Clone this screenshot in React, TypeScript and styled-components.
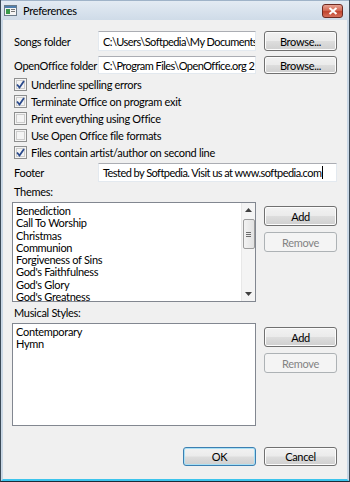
import React from "react";
import styled, { createGlobalStyle, css } from "styled-components";

const Global = createGlobalStyle`
  html, body { margin: 0; padding: 0; background: #ffffff; }
  body { font-family: Lato, "Noto Sans", sans-serif; font-size: 11px; letter-spacing: -0.3px; color: #000; }
  * { box-sizing: border-box; }
`;

const Window = styled.div`
  width: 350px;
  height: 482px;
  display: flex;
  flex-direction: column;
  background: #f0f0f0;
  border-left: 1px solid #3b4a57;
  border-right: 1px solid #3b4a57;
  border-bottom: 1px solid #1c2a36;
  overflow: hidden;
`;

const TitleBar = styled.div`
  height: 20px;
  flex: 0 0 20px;
  display: flex;
  align-items: center;
  padding: 0 6px 0 3px;
  gap: 6px;
  background: linear-gradient(#e3ebf3, #cfdbe8);
  border-top: 1px solid #9fb3c8;
`;

const TitleText = styled.span`
  flex: 1;
  font-size: 11px;
  color: #000;
`;

const CloseBtn = styled.div`
  width: 21px;
  height: 14px;
  border-radius: 3px;
  border: 1px solid #6d2a22;
  background: linear-gradient(#e7a292 0%, #d36b57 45%, #c0442e 55%, #d7705c 100%);
  display: flex;
  align-items: center;
  justify-content: center;
`;

const Frame = styled.div`
  flex: 1;
  display: flex;
  flex-direction: column;
  border-left: 2px solid #c9d7e5;
  border-right: 2px solid #c9d7e5;
  border-bottom: 2px solid #3cc4ec;
`;

const Body = styled.div`
  flex: 1;
  display: flex;
  flex-direction: column;
  padding: 11px 10px 0 9px;
`;

const FieldRow = styled.div<{ $mt?: number }>`
  display: grid;
  grid-template-columns: 78px minmax(0, 1fr) 73px;
  column-gap: 8px;
  align-items: center;
  height: 20px;
  margin-top: ${(p) => p.$mt ?? 0}px;
`;

const FooterRow = styled.div`
  display: grid;
  grid-template-columns: 78px minmax(0, 1fr);
  column-gap: 8px;
  align-items: center;
  height: 19px;
  margin-top: 2px;
`;

const Label = styled.span`
  padding-left: 2px;
  white-space: nowrap;
`;

const TextBox = styled.div<{ $h?: number }>`
  height: ${(p) => p.$h ?? 20}px;
  background: #fff;
  border: 1px solid #e3e9ef;
  border-top-color: #abadb3;
  padding: 0 1px 0 4px;
  display: flex;
  align-items: center;
  white-space: nowrap;
  overflow: hidden;
  letter-spacing: -0.55px;
`;

const Caret = styled.span`
  display: inline-block;
  width: 1px;
  height: 13px;
  background: #000;
  margin-left: 1px;
`;

const Button = styled.div<{ $disabled?: boolean; $default?: boolean; $h?: number }>`
  height: ${(p) => p.$h ?? 20}px;
  border: 1px solid #707070;
  border-radius: 3px;
  background: linear-gradient(#f2f2f2 0%, #ebebeb 48%, #dddddd 52%, #cfcfcf 100%);
  box-shadow: inset 0 0 0 1px #fcfcfc;
  display: flex;
  align-items: center;
  justify-content: center;
  color: #000;
  white-space: nowrap;
  ${(p) =>
    p.$disabled &&
    css`
      border-color: #adb2b5;
      background: #f4f4f4;
      color: #838383;
      box-shadow: none;
    `}
  ${(p) =>
    p.$default &&
    css`
      border-color: #3c7fb1;
      box-shadow: inset 0 0 0 1px #a9e0f5;
    `}
`;

const Checks = styled.div`
  display: flex;
  flex-direction: column;
  margin-top: 1px;
`;

const CheckRow = styled.div`
  height: 17px;
  display: flex;
  align-items: center;
  gap: 4px;
  padding-left: 2px;
`;

const Box = styled.div`
  width: 13px;
  height: 13px;
  border: 1px solid #8e8f8f;
  background: #f4f4f4;
  display: flex;
  align-items: center;
  justify-content: center;
  box-shadow: inset 0 0 0 1px #f4f4f4, inset 0 0 0 2px #cdcdcd;
`;

const SectionLabel = styled.div<{ $mt: number }>`
  margin-top: ${(p) => p.$mt}px;
  padding-left: 2px;
  height: 14px;
  line-height: 14px;
`;

const ListRow = styled.div<{ $h: number; $mt: number }>`
  display: grid;
  grid-template-columns: minmax(0, 1fr) 73px;
  column-gap: 8px;
  height: ${(p) => p.$h}px;
  margin-top: ${(p) => p.$mt}px;
`;

const ListBox = styled.div`
  background: #fff;
  border: 1px solid #828790;
  display: flex;
  overflow: hidden;
`;

const Items = styled.div`
  flex: 1;
  padding: 2px 3px;
  line-height: 12.3px;
`;

const ListButtons = styled.div`
  display: flex;
  flex-direction: column;
  gap: 6px;
  padding-top: 4px;
`;

const ScrollBar = styled.div`
  width: 14px;
  background: #f4f4f4;
  border-left: 1px solid #e8e8e8;
  display: flex;
  flex-direction: column;
  align-items: center;
`;

const Arrow = styled.div`
  height: 14px;
  display: flex;
  align-items: center;
  justify-content: center;
`;

const Thumb = styled.div`
  width: 12px;
  height: 30px;
  border: 1px solid #9c9c9c;
  border-radius: 2px;
  background: linear-gradient(90deg, #f2f2f2, #e2e2e2);
  margin-top: 2px;
  display: flex;
  flex-direction: column;
  align-items: center;
  justify-content: center;
  gap: 1px;
`;

const Grip = styled.div`
  width: 5px;
  height: 1px;
  background: #6d6d6d;
`;

const Track = styled.div`
  flex: 1;
`;

const Bottom = styled.div`
  display: flex;
  justify-content: flex-end;
  gap: 8px;
  margin-top: 21px;
`;

const BottomButton = styled(Button)`
  width: 73px;
`;

const Check = () => (
  <svg width="9" height="9" viewBox="0 0 9 9">
    <path d="M1 4.5 L3.5 7.5 L8 1" fill="none" stroke="#2a4a8c" strokeWidth="1.8" />
  </svg>
);

const CheckItem = ({ checked, label }: { checked: boolean; label: string }) => (
  <CheckRow>
    <Box>{checked && <Check />}</Box>
    <span>{label}</span>
  </CheckRow>
);

const themes = [
  "Benediction",
  "Call To Worship",
  "Christmas",
  "Communion",
  "Forgiveness of Sins",
  "God's Faithfulness",
  "God's Glory",
  "God's Greatness",
];

export default function App() {
  return (
    <>
      <Global />
      <Window>
        <TitleBar>
          <svg width="13" height="11" viewBox="0 0 13 11">
            <rect x="0.5" y="0.5" width="12" height="10" fill="#f4f4f4" stroke="#6a7a88" />
            <rect x="1" y="1" width="11" height="2" fill="#4f7fae" />
            <rect x="2" y="4" width="4" height="5" fill="#3a9a4a" />
            <rect x="7" y="4" width="4" height="1" fill="#777" />
            <rect x="7" y="6" width="4" height="1" fill="#777" />
          </svg>
          <TitleText>Preferences</TitleText>
          <CloseBtn>
            <svg width="10" height="8" viewBox="0 0 10 8">
              <path d="M1.5 1 L8.5 7 M8.5 1 L1.5 7" stroke="#fff" strokeWidth="2" />
            </svg>
          </CloseBtn>
        </TitleBar>
        <Frame>
          <Body>
            <FieldRow>
              <Label>Songs folder</Label>
              <TextBox>C:\Users\Softpedia\My Documents</TextBox>
              <Button>Browse...</Button>
            </FieldRow>
            <FieldRow $mt={4}>
              <Label>OpenOffice folder</Label>
              <TextBox $h={18}>C:\Program Files\OpenOffice.org 2</TextBox>
              <Button $h={18}>Browse...</Button>
            </FieldRow>
            <Checks>
              <CheckItem checked label="Underline spelling errors" />
              <CheckItem checked label="Terminate Office on program exit" />
              <CheckItem checked={false} label="Print everything using Office" />
              <CheckItem checked={false} label="Use Open Office file formats" />
              <CheckItem checked label="Files contain artist/author on second line" />
            </Checks>
            <FooterRow>
              <Label>Footer</Label>
              <TextBox $h={19}>
                Tested by Softpedia. Visit us at www.softpedia.com<Caret />
              </TextBox>
            </FooterRow>
            <SectionLabel $mt={3}>Themes:</SectionLabel>
            <ListRow $h={100} $mt={3}>
              <ListBox>
                <Items>
                  {themes.map((t) => (
                    <div key={t}>{t}</div>
                  ))}
                </Items>
                <ScrollBar>
                  <Arrow>
                    <svg width="7" height="4" viewBox="0 0 7 4">
                      <path d="M0 4 L3.5 0 L7 4 Z" fill="#404040" />
                    </svg>
                  </Arrow>
                  <Thumb>
                    <Grip />
                    <Grip />
                    <Grip />
                  </Thumb>
                  <Track />
                  <Arrow>
                    <svg width="7" height="4" viewBox="0 0 7 4">
                      <path d="M0 0 L3.5 4 L7 0 Z" fill="#404040" />
                    </svg>
                  </Arrow>
                </ScrollBar>
              </ListBox>
              <ListButtons>
                <Button>Add</Button>
                <Button $disabled>Remove</Button>
              </ListButtons>
            </ListRow>
            <SectionLabel $mt={4}>Musical Styles:</SectionLabel>
            <ListRow $h={103} $mt={3}>
              <ListBox>
                <Items>
                  <div>Contemporary</div>
                  <div>Hymn</div>
                </Items>
              </ListBox>
              <ListButtons>
                <Button>Add</Button>
                <Button $disabled>Remove</Button>
              </ListButtons>
            </ListRow>
            <Bottom>
              <BottomButton $default $h={19}>OK</BottomButton>
              <BottomButton $h={19}>Cancel</BottomButton>
            </Bottom>
          </Body>
        </Frame>
      </Window>
    </>
  );
}
